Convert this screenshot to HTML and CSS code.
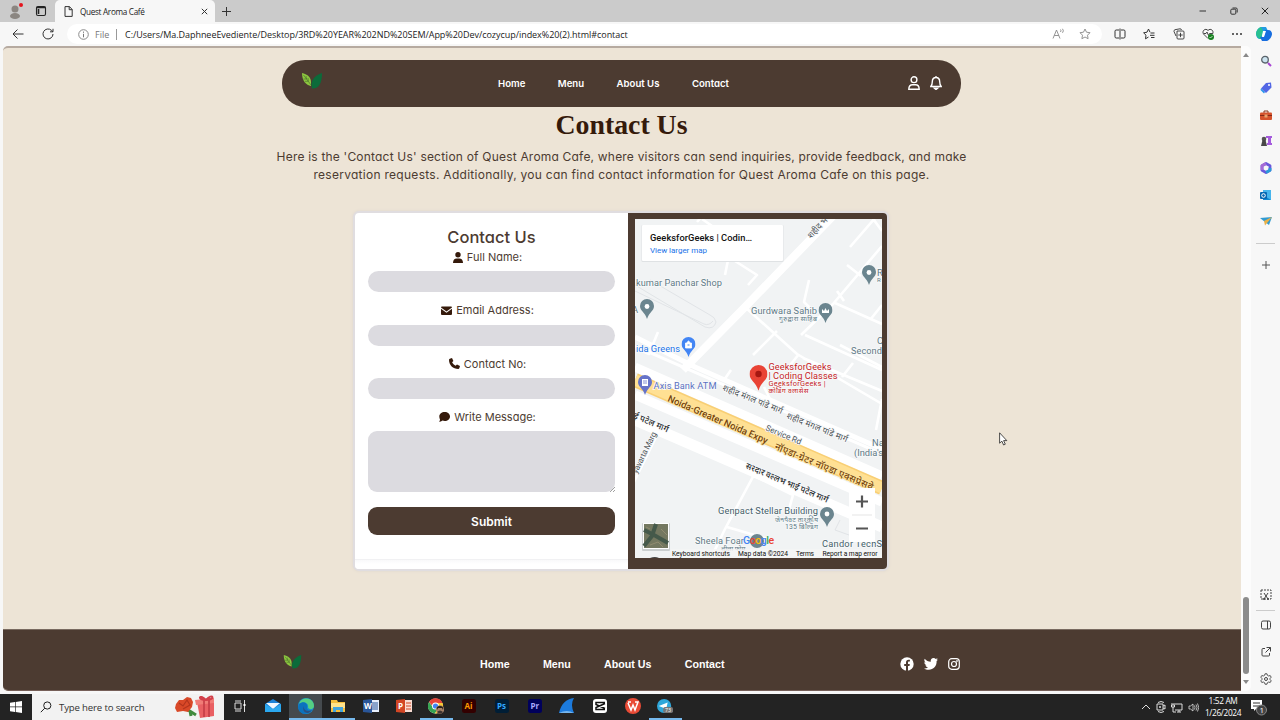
FILE: index.html
```html
<!DOCTYPE html>
<html lang="en">
<head>
<meta charset="utf-8">
<title>Quest Aroma Café</title>
<link rel="stylesheet" href="styles.css">
</head>
<body>
<svg class="defs" width="0" height="0">
  <symbol id="leaf" viewBox="0 0 20 16"><path fill="#8cc63f" d="M0 0c5 1 9 4 9 9v4C4 12 0 8 0 0z"/><path stroke="#466c2b" stroke-width=".6" fill="none" d="M1.500 2 9 12M4 3l.5 3-3 0M6 5l.3 3.300-3.300 0"/><path fill="#0b6b3a" d="M20 0c0 10-3 16-10 15.500C8 9 11 3 20 0z"/></symbol>
  <symbol id="pin" viewBox="0 0 14 20"><path d="M7 0a7 7 0 0 0-7 7c0 5 5 6 7 13 2-7 7-8 7-13a7 7 0 0 0-7-7z"/></symbol>
</svg>
<div class="screen">
  <header class="titlebar">
    <div class="profile">
      <svg width="18" height="18" viewBox="0 0 18 18"><circle cx="8" cy="7" r="3.500" fill="#8b8681"/><ellipse cx="8" cy="14" rx="5" ry="3" fill="#8b8681"/><circle cx="14" cy="3" r="2" fill="#e5141d"/></svg>
      <svg width="12" height="12" viewBox="0 0 12 12"><rect x="1.500" y="1.500" width="9" height="9" rx="1.500" fill="none" stroke="#222" stroke-width="1.100"/><path d="M1.500 2.500h9M3.500 4v5" stroke="#222" stroke-width="1.600"/></svg>
    </div>
    <div class="tab">
      <svg width="9" height="11" viewBox="0 0 9 11"><path d="M1 .6h4.500L8.200 3.500v6.900H1zM5.200.6v3.100h3" fill="none" stroke="#333"/></svg>
      <span class="tab-title">Quest Aroma Café</span>
      <svg width="7" height="7" viewBox="0 0 7 7"><path d="M.8.8l5.400 5.400M6.200.8.8 6.200" stroke="#333"/></svg>
    </div>
    <svg class="newtab" width="11" height="11" viewBox="0 0 11 11"><path d="M5.500 1v9M1 5.500h9" stroke="#333"/></svg>
    <div class="winctl">
      <svg width="8" height="8" viewBox="0 0 8 8"><path d="M.5 4h6.500" stroke="#333"/></svg>
      <svg width="8" height="8" viewBox="0 0 8 8"><rect x=".8" y="2.200" width="5" height="5" rx="1" fill="none" stroke="#333"/><path d="M2.500 1h3.500q1.200 0 1.200 1.200V5.500" fill="none" stroke="#333"/></svg>
      <svg width="8" height="8" viewBox="0 0 8 8"><path d="M.8.8l6.400 6.400M7.200.8.8 7.200" stroke="#222"/></svg>
    </div>
  </header>
  <div class="toolbar">
    <div class="navbtns">
      <svg width="12" height="12" viewBox="0 0 12 12"><path d="M11.500 6H1M5.500 1.500 1 6l4.500 4.500" fill="none" stroke="#333"/></svg>
      <svg width="12" height="12" viewBox="0 0 12 12"><path d="M11 6a5 5 0 1 1-1.600-3.700L11 3.800M11 .8v3H8" fill="none" stroke="#333"/></svg>
    </div>
    <div class="address">
      <svg width="11" height="11" viewBox="0 0 11 11"><circle cx="5.500" cy="5.500" r="4.800" fill="none" stroke="#8a8a8a"/><path d="M5.500 4.800v3.500M5.500 2.600v1.200" stroke="#777"/></svg>
      <span class="file">File</span><i class="bar"></i>
      <span class="url">C:/Users/Ma.DaphneeEvediente/Desktop/3RD%20YEAR%202ND%20SEM/App%20Dev/cozycup/index%20(2).html#contact</span>
      <svg class="read" width="13" height="12" viewBox="0 0 13 12"><path d="M1 10.500 4.500 2 8 10.500M2.300 7.500h4.500M8.500 1.500q1 1.200 0 2.500M10.500.8q1.700 2 0 4" fill="none" stroke="#888" stroke-width=".9"/></svg>
      <svg width="12" height="12" viewBox="0 0 12 12"><path d="m6 1 1.500 3.200 3.500.5-2.500 2.500.6 3.500L6 9 2.900 10.700l.6-3.500L1 4.700l3.500-.5z" fill="none" stroke="#888" stroke-width=".9"/></svg>
    </div>
    <div class="tools">
      <svg width="12" height="12" viewBox="0 0 12 12"><path d="M5 2H2.200Q1 2 1 3.200v5.600Q1 10 2.200 10H5M7 2h2.800Q11 2 11 3.200v5.600Q11 10 9.800 10H7M6 .5v11" fill="none" stroke="#333"/></svg>
      <svg width="12" height="12" viewBox="0 0 12 12"><path d="M7 4.200 5.500 1 4 4.200.6 4.800 3 7.200l-.5 3.600L5.500 9M7.500 5h4M7 7.300h4.500M8 9.500h3.500" fill="none" stroke="#333"/></svg>
      <svg width="12" height="12" viewBox="0 0 12 12"><path d="M3 8 1 3.500Q.8 2 2 1.700L7 .8Q8.400.8 8.500 2M4 3h6q1 0 1 1v6q0 1-1 1H5q-1 0-1-1zM7.500 4.800v4.400M5.300 7h4.400" fill="none" stroke="#333" stroke-width=".9"/></svg>
      <svg width="12" height="12" viewBox="0 0 12 12"><path d="M6 10.500 1.500 6C-.5 3 3.500-.5 6 2.500 8.500-.5 12.500 3 10.500 6M2 5.500h2l1-1.500 1.500 3.500 1-2h3" fill="none" stroke="#333" stroke-width=".9"/><circle cx="9" cy="9" r="3" fill="#16801f"/><path d="m7.500 9 1 1 2-2" stroke="#fff" fill="none" stroke-width=".7"/></svg>
      <svg width="12" height="12" viewBox="0 0 12 12"><g fill="#333"><circle cx="2" cy="6" r="1"/><circle cx="6" cy="6" r="1"/><circle cx="10" cy="6" r="1"/></g></svg>
      <svg class="copilot" width="16" height="16" viewBox="0 0 16 16"><path d="M5 1h5l2 4-5 1-2 7H4C2 13 0 11 0 8s2-6 5-7z" fill="#249be4"/><path d="M0 8c0-3 2-6 5-7l2 4-2 8H4Q1 12 0 8z" fill="#29c18f"/><path d="M9 4h3c3 0 4 2 4 4s-2 6-5 7H6l-2-4 4-1z" fill="#176ddf"/><path d="m7 5h3L8 11H6z" fill="#fff"/></svg>
    </div>
  </div>

  <div class="middle">
    <main class="page">
      <nav class="nav">
        <svg class="nav-logo" width="20" height="16"><use href="#leaf"/></svg>
        <div class="nav-links"><a>Home</a><a>Menu</a><a>About Us</a><a>Contact</a></div>
        <div class="nav-icons">
          <svg width="12" height="14" viewBox="0 0 12 14"><circle cx="6" cy="3.700" r="2.900"/><path d="M.8 13.200c0-3 1.500-4.500 3.700-4.500h3c2.200 0 3.700 1.500 3.700 4.500z"/></svg>
          <svg width="12" height="14" viewBox="0 0 12 14"><path d="M6 1.500c-2.300 0-3.700 1.800-3.700 4.200 0 2.500-.7 3.800-1.500 4.800h10.400c-.8-1-1.500-2.300-1.500-4.800 0-2.400-1.400-4.200-3.700-4.200zM6 0v1.500"/><path d="M4.500 12.300h3L6 13.500z" fill="#fff"/></svg>
        </div>
      </nav>
      <h1 class="title">Contact Us</h1>
      <p class="intro"><span class="line l1">Here is the 'Contact Us' section of Quest Aroma Cafe, where visitors can send inquiries, provide feedback, and make</span><span class="line l2">reservation requests. Additionally, you can find contact information for Quest Aroma Cafe on this page.</span></p>
      <section class="card">
        <form class="form">
          <h2>Contact Us</h2>
          <label><svg width="10" height="11" viewBox="0 0 10 11"><circle cx="5" cy="2.800" r="2.700"/><path d="M0 11c0-3.300 1.600-4.500 3.800-4.500h2.400C8.400 6.500 10 7.700 10 11z"/></svg><span>Full Name:</span></label>
          <div class="field"></div>
          <label><svg width="11" height="9" viewBox="0 0 11 9"><path d="M1 .5h9q1 0 1 1L5.500 5.500 0 1.500q0-1 1-1z"/><path d="M0 2.700 5.500 6.700 11 2.700V8q0 1-1 1H1Q0 9 0 8z"/></svg><span>Email Address:</span></label>
          <div class="field"></div>
          <label><svg width="11" height="11" viewBox="0 0 11 11"><path d="M.8.7 3 0l1.400 3-1.300 1.300c.7 1.500 2 2.800 3.500 3.500L8 6.500 11 8l-.7 2.300q-.3.7-1 .7C4 11 0 7 0 1.700Q0 1 .8.700z"/></svg><span>Contact No:</span></label>
          <div class="field"></div>
          <label><svg width="11" height="10" viewBox="0 0 11 10"><path d="M5.700 0C8.700 0 11 2 11 4.500S8.700 9 5.700 9q-1.200 0-2.200-.4Q2 9.800 0 9.800q1-1 1-2.400Q.3 6 .3 4.500C.3 2 2.700 0 5.700 0z"/></svg><span>Write Message:</span></label>
          <div class="field message"><svg width="5" height="5" viewBox="0 0 5 5"><path d="M0 5 5 0M3 5l2-2" stroke="#777" stroke-width=".7"/></svg></div>
          <button type="button">Submit</button>
          <div class="form-end"></div>
        </form>
        <div class="mapbox">
          <svg class="map" width="247" height="339" viewBox="635 219 247 339">
            <rect x="635" y="219" width="247" height="339" fill="#f1f3f4"/>
            <g fill="none" stroke="#e1e4e7"><path d="M635 285 705 327q9 3 11-5-1-5-6-7L650 280M635 291l69 33q5 2 9-3M840 520l-5 10 14 5q7-1 5-9"/></g>
            <g fill="none" stroke="#fff" stroke-width="2.600" stroke-linejoin="round">
              <path d="M850 247 882 210M871 216l11 15M697 222l7-8M702 219l30 21-7 35M735 261l22 14-9 10M814 312l-10-10 5-22M801 335 833 304 882 246M847 265l14 11M835 303l47 21M870 320l12-15M837 291l7 10M745 307l52 47 85 50M799 354l-12 15M805 335l77 35M777 331 753 355M803 358l79 33M840 345l42 22M658 332l-9 22-11-5M731 370l-7 10M770 399l-6-12M882 399l-6 31M842 377l11-14M755 473l-30 56-14 29M727 527l44 13M752 475l41 20-5 18M658 433l-28 57"/>
            </g>
            <g fill="none" stroke="#fff">
              <path d="m833 216-88 91-62 63" stroke-width="8"/>
              <path d="M635 337l60 30 187 82" stroke-width="5"/><path d="M635 346l247 108" stroke-width="3"/>
              <path d="M635 367l247 109M635 395l247 107" stroke-width="9"/>
              <path d="M635 420 882 527" stroke-width="11"/>
            </g>
            <path d="M635 380 882 488" stroke="#f9cf74" stroke-width="14"/><path d="M635 380 882 488" stroke="#ffe093" stroke-width="11"/>
            <g font-family="Roboto, 'Noto Sans', sans-serif" stroke="#f8f9fa" stroke-width="1.500" paint-order="stroke">
              <g fill="#607985" font-size="9.300">
                <text x="636" y="285.500" textLength="86">kumar Panchar Shop</text>
                <text x="751" y="314" textLength="66">Gurdwara Sahib</text>
                <text x="779" y="321" font-size="7" textLength="38">गुरुद्वारा साहिब</text>
                <text x="851" y="353.500" textLength="31">Second</text><text x="877" y="344">C</text><text x="877" y="276">R</text><text x="877" y="282" font-size="6">R</text>
                <text x="632" y="313">A</text>
                <text x="872" y="446">Na</text><text x="854" y="455.500">(India's</text>
                <text x="718" y="514" fill="#455f69" textLength="100">Genpact Stellar Building</text>
                <text x="775" y="522" font-size="7" textLength="43">जेनपैक्ट तारकीय</text><text x="785" y="529" font-size="7" textLength="33">135 बिल्डिंग</text>
                <text x="695" y="543.500" textLength="49">Sheela Foar</text><text x="721" y="551" font-size="6.500">शीला फोम</text>
                <text x="822" y="547" fill="#455f69" textLength="60">Candor TechS</text>
              </g>
              <text x="636" y="351.500" font-size="9.300" fill="#1a73e8" textLength="44">ida Greens</text>
              <text x="653.500" y="389" font-size="9.300" fill="#5b72c2" textLength="63">Axis Bank ATM</text>
              <g fill="#c5221f"><text x="768.500" y="369.500" font-size="9.300" textLength="63">GeeksforGeeks</text><text x="768.500" y="379" font-size="9.300" textLength="69">| Coding Classes</text><text x="768.500" y="386" font-size="7.500" textLength="57">GeeksforGeeks |</text><text x="768.500" y="393" font-size="7" textLength="40">कोडिंग क्लासेस</text></g>
              <g fill="#4c5357" font-size="8.600">
                <text transform="translate(811 239) rotate(-47)" textLength="30">शहीद भग</text>
                <text transform="translate(722 390) rotate(22)" textLength="64">शहीद मंगल पांडे मार्ग</text><text transform="translate(786 418) rotate(22)" textLength="65">शहीद मंगल पांडे मार्ग</text>
                <text transform="translate(765 430) rotate(23)" font-size="8.300" textLength="38">Service Rd</text>
                <g fill="#292c2f" font-weight="500"><text transform="translate(633 418) rotate(23)" textLength="37">ई पटेल मार्ग</text>
                <text transform="translate(745 468) rotate(23)" textLength="89">सरदार वल्लभ भाई पटेल मार्ग</text></g>
                <text transform="translate(637 474) rotate(-64)" font-size="8.300" textLength="45">yavarta Marg</text>
              </g>
              <g fill="#76440e" stroke="#ffe49b" font-size="9.700" font-weight="500"><text transform="translate(667 401) rotate(23.500)" textLength="108">Noida-Greater Noida Expy</text><text transform="translate(774 449) rotate(23)" textLength="106">नॉएडा-ग्रेटर नॉएडा एक्सप्रेसवे</text></g>
            </g>
            <g fill="#6b858f"><use href="#pin" x="640" y="299" width="14" height="20"/><use href="#pin" x="862" y="265" width="14" height="20"/><use href="#pin" x="818.500" y="303" width="14" height="20"/><use href="#pin" x="820" y="507" width="14" height="20"/><circle cx="757" cy="541" r="7"/></g>
            <g fill="#fff"><circle cx="647" cy="306.500" r="2.400"/><circle cx="869" cy="272.500" r="2.400"/><path d="M822 313v-4l2 2 1.500-3 1.500 3 2-2v4z"/><circle cx="827" cy="514" r="2.400"/></g>
            <use href="#pin" x="681.500" y="337" width="14" height="20" fill="#4285f4"/><path d="M685.500 343h6v5h-6zM687 343q1.500-4 3 0" fill="#fff" stroke="#fff" stroke-width=".8"/><path d="M687.500 345h2" stroke="#4285f4"/>
            <use href="#pin" x="638" y="375" width="14" height="20" fill="#6673c8"/><path d="M642 379h6v7h-6z" fill="#fff"/><path d="M643 381h4M643 383h4" stroke="#6673c8" stroke-width=".8"/>
            <use href="#pin" x="749.500" y="365" width="18" height="25.700" fill="#e94335"/><circle cx="758.500" cy="374" r="3.200" fill="#a61711"/>
            <g font-family="Roboto, sans-serif" font-size="10.500" font-weight="500"><text x="743" y="544" textLength="31"><tspan fill="#4285f4">G</tspan><tspan fill="#ea4335">o</tspan><tspan fill="#fbbc05">o</tspan><tspan fill="#4285f4">g</tspan><tspan fill="#34a853">l</tspan><tspan fill="#ea4335">e</tspan></text></g>
            <rect x="641.500" y="225" width="142" height="37" rx="1" fill="#dfe2e4"/><rect x="642" y="225" width="141" height="36" rx="1" fill="#fff"/>
            <g font-family="Roboto, sans-serif"><text x="650" y="240.500" font-size="9.300" font-weight="500" fill="#111" textLength="102">GeeksforGeeks | Codin…</text><text x="650" y="252.500" font-size="8" fill="#1a73e8" textLength="57">View larger map</text>
            <rect x="671" y="549" width="211" height="9" fill="#f5f5f5" opacity=".8"/>
            <g font-size="6.700" fill="#111"><text x="672" y="555.500" textLength="58">Keyboard shortcuts</text><text x="738" y="555.500" textLength="50">Map data ©2024</text><text x="796" y="555.500" textLength="18">Terms</text><text x="822.500" y="555.500" textLength="55">Report a map error</text></g></g>
            <rect x="849" y="488" width="26" height="54" fill="#fff"/><path d="M852 515h20" stroke="#e5e5e5"/><path d="M856 501.500h12M862 495.500v12M856 528.500h12" stroke="#555" stroke-width="2.200"/>
            <rect x="642" y="523" width="28" height="28" rx="1" fill="#cbcfd0"/><rect x="643" y="523" width="26" height="26" fill="#fff"/><rect x="644" y="524" width="24" height="24" fill="#747860"/><path d="m644 530 10 5 14 8M656 524l-4 12-8 10" stroke="#45594a" stroke-width="4" fill="none"/><path d="M650 545l8-3 5 5M661 529l6 6M646 527l4 2" stroke="#918c70" fill="none"/>
            <path d="M650 558q5-2 9 0z" fill="#444"/>
          </svg>
        </div>
      </section>
      <footer class="footer">
        <svg class="foot-logo" width="19" height="14"><use href="#leaf"/></svg>
        <div class="foot-links"><a>Home</a><a>Menu</a><a>About Us</a><a>Contact</a></div>
        <div class="foot-icons">
          <svg width="14" height="14" viewBox="0 0 14 14"><circle cx="7" cy="7" r="6.700" fill="#fff"/><path d="M6 14V9H4.200V7H6V5.500C6 3.600 7 2.700 8.500 2.700l1.400.1v1.800H9C8.200 4.600 8 5 8 5.700V7h1.800l-.3 2H8v5z" fill="#4c3b31"/></svg>
          <svg width="14" height="12" viewBox="0 0 14 12"><path fill="#fff" d="M14 1.700 12.600 3C13 8 9 12 4.400 11.700 2.800 11.700 1.300 11.300 0 10.400c1.500.1 2.900-.3 4-1.200-1.300 0-2.200-.9-2.600-2h1.200C1.200 6.800.3 5.600.3 4.200l1.300.4C.3 3.600 0 2 .7.700c1.600 1.900 3.600 2.900 6.100 3C6.300 1.500 7.800 0 9.600 0q1.200 0 2.100.9L13.500.2q-.3 1-1.200 1.600z"/></svg>
          <svg width="12" height="12" viewBox="0 0 12 12" fill="none" stroke="#fff" stroke-width="1.200"><rect x=".7" y=".7" width="10.600" height="10.600" rx="3"/><circle cx="6" cy="6" r="2.500"/><circle cx="9" cy="3" r=".3"/></svg>
        </div>
      </footer>
    </main>
    <div class="scroll"><i class="up"></i><div class="thumb"></div><i class="down"></i></div>
    <aside class="side">
      <div><svg viewBox="0 0 12 12"><path d="m8 8 3 3" stroke="#a845d4" stroke-width="2"/><circle cx="5" cy="4.700" r="3.300" fill="#cce3ef" stroke="#59636b" stroke-width="1.300"/></svg></div>
      <div><svg viewBox="0 0 12 12"><path d="m6 1 5-.5.5 5L6 11 1 6.500z" fill="#5367e5"/><path d="M1 6.500 5 10l-1 1.500L.5 8z" fill="#2996ed"/><circle cx="9" cy="3" r="1" fill="#fff"/></svg></div>
      <div><svg viewBox="0 0 12 12"><path d="M4 4V2h4v2" fill="none" stroke="#87351c"/><rect y="3.500" width="12" height="7.500" rx="1" fill="#d5522c"/><path d="M0 6.500h12" stroke="#862a19"/><rect x="4.500" y="5.500" width="3" height="3" fill="#e8a26e"/></svg></div>
      <div><svg viewBox="0 0 12 12"><path d="M6 1h6v2h-1v5h1v2H7V8h1V3H6z" fill="#a55bdd"/><circle cx="4" cy="4" r="2.300" fill="#555"/><path d="M2.500 5h3L7 11H1z" fill="#484848"/></svg></div>
      <div><svg viewBox="0 0 12 12"><path d="M6 1.500 10 3.700v4.600L6 10.500 2 8.300V3.700z" fill="none" stroke="#6958dc" stroke-width="2.800" stroke-linejoin="round"/><path d="M2 8V3.700L6 1.500" fill="none" stroke="#a56bd5" stroke-width="2.800" stroke-linejoin="round"/><path d="M10 6v2.300L6 10.500" fill="none" stroke="#299bd9" stroke-width="2.800" stroke-linejoin="round"/></svg></div>
      <div><svg viewBox="0 0 12 12"><path d="M3 1h8v10H3z" fill="#47b5ed"/><path d="m3 6 8 5H3z" fill="#1388d2"/><rect y="3" width="7" height="7" rx="1" fill="#0868b3"/><circle cx="3.500" cy="6.500" r="1.800" fill="none" stroke="#fff"/></svg></div>
      <div><svg viewBox="0 0 12 12"><path d="M0 3 12 2 9 10 5 7z" fill="#329bd1"/><path d="M12 2 4 6l1 4.500L7 8z" fill="#e9b047"/></svg></div>
      <i class="sep"></i>
      <div><svg viewBox="0 0 12 12"><path d="M6 2v8M2 6h8" stroke="#555"/></svg></div>
      <span class="space"></span>
      <div class="capture"><svg viewBox="0 0 12 12"><rect x="1" y="1" width="10" height="9" fill="none" stroke="#444" stroke-dasharray="2 1"/><path d="m4 4 4 6M8 4l-4 6" stroke="#444"/><circle cx="4" cy="10" r="1" fill="#444"/><circle cx="8" cy="10" r="1" fill="#444"/></svg></div>
      <i class="sep"></i>
      <div><svg viewBox="0 0 12 12"><rect x="1.500" y="2" width="9" height="8" rx="1.500" fill="none" stroke="#444"/><path d="M7.500 2v8" stroke="#444"/></svg></div>
      <div><svg viewBox="0 0 12 12"><path d="M5 2.500H3Q2 2.500 2 3.500V9q0 1 1 1h5.500q1 0 1-1V7M6.500 1.500h4v4M10.500 1.500 5.500 6.500" fill="none" stroke="#444"/></svg></div>
      <div><svg viewBox="0 0 12 12"><path d="m5 .8h2l.4 1.500 1.300.7 1.500-.5 1 1.700L10.100 5.300v1.400l1.100 1.100-1 1.700L8.700 9l-1.300.7L7 11.200H5l-.4-1.500L3.300 9l-1.500.5-1-1.700 1.100-1.100V5.300L.8 4.200l1-1.700 1.500.5 1.300-.7z" fill="none" stroke="#444" stroke-width=".9"/><circle cx="6" cy="6" r="1.500" fill="none" stroke="#444"/></svg></div>
    </aside>
  </div>

  <div class="taskbar">
    <div class="start"><svg width="12" height="12" viewBox="0 0 12 12"><path fill="#fff" d="M0 1.700 5 1v4.600H0zm5.700-.8L12 0v5.600H5.700zM0 6.300h5v4.600l-5-.7zm5.700 0H12V12l-6.300-.9z"/></svg></div>
    <div class="search"><svg width="12" height="12" viewBox="0 0 12 12"><circle cx="7.300" cy="4.500" r="3.600" fill="none" stroke="#222"/><path d="m4.800 7.200-4 4" stroke="#222"/></svg><span>Type here to search</span>
      <svg class="gift" width="41" height="24" viewBox="0 0 41 24"><path d="m10 13 11 7M15 16l1 5" stroke="#408a3d" stroke-width="3"/><path d="M1 9 4 5l4 0 4-3 4 1 2 4-1 5-4 5-5-1-6 1-2-4z" fill="#d94928"/><path d="m4 8 4 3 4-6 3 5-7 4" stroke="#b3341d" stroke-width="1.200" fill="none"/><path d="m22 7 17-2v16l-14 2z" fill="#e96063"/><path d="m20 5 19-2v5l-18 2z" fill="#f17c77"/><path d="M29 3v19M34 3v19" stroke="#c63e47" stroke-width="1.700"/><path d="M31 5c-7-7-9 0 0 0 7-8 10 0 0 0" fill="none" stroke="#d2404a" stroke-width="2"/></svg></div>
    <div class="apps">
      <div><svg viewBox="0 0 16 16"><path d="M3 3h6M3 13h6M3 5h6v6H3zM12.500 2v12" fill="none" stroke="#ddd"/><path d="M12.500 6v2" stroke="#fff" stroke-width="2"/></svg></div>
      <div><svg viewBox="0 0 16 16"><path d="m0 6 8-5 8 5v8H0z" fill="#1c82d8"/><path d="M1 5h14L8 11z" fill="#eef7ff"/><path d="m0 6 8 5 8-5v8H0z" fill="#2ba8ef"/></svg></div>
      <div class="active"><svg viewBox="0 0 16 16"><circle cx="8" cy="8" r="8" fill="#168bd0"/><path d="M1 6C3-2 16-1 16 8c0 4-6 4-6 1 1-4-5-6-9-3z" fill="#55cf83"/><path d="M1 6c6-4 9 0 8 4 0 2 3 3 5 2-6 8-17 2-13-6z" fill="#0c72bd"/><path d="M6 8c-1 5 4 6 8 4-4 6-11 2-8-4z" fill="#2b4f80"/></svg></div>
      <div class="open"><svg viewBox="0 0 16 16"><path d="M1 2h6l1 2h7v10H1z" fill="#f5be3d"/><path d="M1 5h14v5H1z" fill="#ffe28a"/><path d="M3 9h10v5h-3v-2H6v2H3z" fill="#44a4dc"/></svg></div>
      <div><svg viewBox="0 0 16 16"><rect x="7" y="2" width="9" height="12" fill="#e8effc"/><path d="M9 5h6M9 7h6M9 9h6M9 11h6" stroke="#2a5699"/><path d="m0 2 9-1v14l-9-1z" fill="#2a5699"/><text x="1" y="11" font-size="8" fill="#fff" font-weight="bold">W</text></svg></div>
      <div><svg viewBox="0 0 16 16"><rect x="7" y="2" width="9" height="12" fill="#f9ddd4"/><path d="M10 5h5M10 8h5M10 11h5" stroke="#d24625"/><path d="m0 2 9-1v14l-9-1z" fill="#d24625"/><text x="2" y="11" font-size="8" fill="#fff" font-weight="bold">P</text></svg></div>
      <div class="open"><svg viewBox="0 0 16 16"><circle cx="7.500" cy="8" r="7.500" fill="#fff"/><path d="M1 4A7.500 7.500 0 0 1 14.500 5H8L5 9z" fill="#e74438"/><path d="M1 4a7.500 7.500 0 0 0 6 11.500l3-5-5-1z" fill="#36a452"/><path d="M14.500 5A7.500 7.500 0 0 1 7 15.500L11 8 8 5z" fill="#f9c931"/><circle cx="7.500" cy="8" r="3.500" fill="#fff"/><circle cx="7.500" cy="8" r="2.600" fill="#4285f4"/><circle cx="12" cy="11.500" r="4.200" fill="#a98367"/><path d="M9 12q-1-4 3-4t3 4l-1-2h-4z" fill="#2c211b"/><path d="M9 14q3-3 6 0-2 3-6 0" fill="#3e3431"/></svg></div>
      <div><svg viewBox="0 0 16 16"><rect x="1" y="1" width="14" height="14" rx="2.500" fill="#330000"/><text x="3.500" y="11" font-size="8" fill="#ff9a00" font-weight="bold">Ai</text></svg></div>
      <div><svg viewBox="0 0 16 16"><rect x="1" y="1" width="14" height="14" rx="2.500" fill="#001e36"/><text x="3" y="11" font-size="8" fill="#31a8ff" font-weight="bold">Ps</text></svg></div>
      <div><svg viewBox="0 0 16 16"><rect x="1" y="1" width="14" height="14" rx="2.500" fill="#00005b"/><text x="3.500" y="11" font-size="8" fill="#aaaaff" font-weight="bold">Pr</text></svg></div>
      <div><svg viewBox="0 0 16 16"><path d="M0 15C2 6 7 1 15 0q-4 6 0 15z" fill="#1c7adc"/><path d="M0 15q8-4 15 0z" fill="#76b5ed"/></svg></div>
      <div><svg viewBox="0 0 16 16"><rect x="1" y="1" width="14" height="14" rx="3" fill="#fff"/><path d="M13 4.500H4v2l9 4M13 5.500l-9 4v2h9" fill="none" stroke="#111" stroke-width="1.500"/></svg></div>
      <div><svg viewBox="0 0 16 16"><circle cx="8" cy="8" r="8" fill="#e94b36"/><path d="M3 4h3M10 4h3l-3 8-2-5-2 5-3-7" fill="none" stroke="#fff" stroke-width="1.500"/></svg></div>
      <div class="open"><svg viewBox="0 0 18 16"><circle cx="8" cy="8" r="8" fill="#2fa7da"/><path d="m2 8 10-4-2 9-3-3z" fill="#fff"/><rect x="7" y="9" width="11" height="7" rx="2" fill="#777"/><text x="9" y="15" font-size="6" fill="#fff">73</text></svg></div>
    </div>
    <div class="tray">
      <svg width="10" height="10" viewBox="0 0 10 10"><path d="m1 7 4-4 4 4" fill="none" stroke="#ddd"/></svg>
      <svg width="10" height="12" viewBox="0 0 10 12"><path d="M2 1.500q3-2 6 0M2 10.500q3 2 6 0M1 3h6v6H1zM7 5l2-1v4L7 7" fill="none" stroke="#ddd"/><circle cx="4" cy="6" r="1" fill="#ddd"/></svg>
      <svg width="12" height="11" viewBox="0 0 12 11"><path d="M4 2h7v6H4M6 10h4M8 8v2M1 1v2M3 1v2M.5 3h3v2h-3zM2 5v5h3" fill="none" stroke="#ddd"/></svg>
      <svg width="11" height="11" viewBox="0 0 11 11"><path d="M1 4h1.500L5 2v7L2.500 7H1zM6.500 3.500q1 2 0 4M8 2.500q2 3 0 6M9.500 1.500q2.500 4 0 8" fill="none" stroke="#ddd" stroke-width=".8"/></svg>
    </div>
    <div class="clock"><span>1:52 AM</span><span>1/26/2024</span></div>
    <svg class="note" width="18" height="18" viewBox="0 0 18 18"><path d="M1 2h11v9H6l-2 2v-2H1z" fill="#fff"/><path d="M3 5h7M3 8h7" stroke="#333"/><circle cx="11.500" cy="12" r="5" fill="#444" stroke="#888"/><text x="9.500" y="15" font-size="8" fill="#fff">1</text></svg>
  </div>
  <svg class="cursor" width="9" height="14" viewBox="0 0 9 14"><path d="M.6.8v10.400l2.300-2 1.700 3.800 1.700-.8-1.700-3.600h3.200z" fill="#fff" stroke="#222" stroke-width=".8"/></svg>
</div>
</body>
</html>
```
FILE: styles.css
```css
* { box-sizing: border-box; }
body { margin: 0; font-family: "Open Sans", "Noto Sans", sans-serif; }
svg { display: block; flex: none; }
.defs { position: absolute; }
.screen { position: relative; width: 1280px; height: 720px; overflow: hidden; display: flex; flex-direction: column; background: #f7f7f7; }
.titlebar { height: 22px; flex: none; display: flex; align-items: center; background: #cbcbcb; }
.profile { width: 55px; display: flex; align-items: center; gap: 10px; padding-left: 7px; }
.tab { width: 160px; height: 22px; background: #f7f7f7; border-radius: 5px 5px 0 0; display: flex; align-items: center; padding: 0 7px 0 9px; }
.tab-title { font-size: 8.200px; letter-spacing: -.32px; color: #222; margin-left: 7px; flex: 1; white-space: nowrap; }
.newtab { margin-left: 6px; }
.winctl { margin-left: auto; display: flex; gap: 23px; padding-right: 11px; }
.toolbar { height: 24px; flex: none; display: flex; align-items: center; background: #f7f7f7; }
.navbtns { width: 67px; display: flex; gap: 18px; padding-left: 12px; }
.address { width: 1035px; height: 20px; background: #fff; border-radius: 10px; display: flex; align-items: center; padding: 0 11px; font-size: 9px; white-space: nowrap; }
.file { color: #777; margin-left: 6px; width: 14px; }
.bar { width: 1px; height: 11px; background: #999; margin: 0 8px 0 7px; }
.url { color: #222; letter-spacing: -.04px; }
.read { margin-left: auto; margin-right: 14px; }
.tools { display: flex; align-items: center; gap: 17.300px; padding-left: 12px; }
.copilot { margin-left: -4px; }
.middle { height: 648px; flex: none; display: flex; }
.page { width: 1238px; height: 645px; margin-left: 3px; border-top: 2px solid #b6aaa0; border-bottom: 1px solid #765f58; border-radius: 5px 0 0 5px; overflow: hidden; background: #ede4d6; display: flex; flex-direction: column; align-items: center; color: #4c3b31; font-family: Inter, "Open Sans", sans-serif; font-feature-settings: "cv11"; }
.nav { width: 679px; height: 47px; flex: none; margin-top: 12px; margin-right: 2px; background: #4c3b31; border-radius: 23px; display: flex; align-items: center; padding: 0 19px 1px 20px; }
.nav-logo { margin-bottom: 5px; }
.nav-links { display: flex; gap: 32.500px; margin-left: 176.500px; font-size: 9.600px; font-weight: 600; color: #fff; white-space: nowrap; }
.nav-icons { margin-left: auto; display: flex; gap: 10px; fill: none; stroke: #fff; stroke-width: 1.400px; }
.title { margin: 1px 1px 0 0; height: 34px; font: bold 27.800px/34px "Liberation Serif", serif; color: #351a0b; white-space: nowrap; }
.intro { margin: 6px 1px 0 0; font-size: 12px; line-height: 18px; text-align: center; white-space: nowrap; }
.line { display: block; }
.l1 { letter-spacing: .2px; }
.l2 { letter-spacing: .28px; }
.card { width: 536px; height: 360px; flex: none; margin: 27px 2px 0 0; border: 2px solid #e0dde0; border-radius: 6px; overflow: hidden; display: flex; background: #fff; box-shadow: 0 0 3px #ddd6cf; }
.form { width: 273px; padding: 13px 13px 0; display: flex; flex-direction: column; align-items: center; }
.form h2 { margin: 0; font-size: 16.500px; line-height: 22px; font-weight: 500; flex: none; }
.form label { height: 18px; flex: none; display: flex; align-items: center; gap: 4px; margin-right: 8px; font-size: 11px; fill: #351a0b; white-space: nowrap; }
.field { width: 247px; height: 21px; margin: 5.300px 0 9px; border-radius: 10.500px; background: #dcdbe0; flex: none; }
.message { height: 61px; margin-bottom: 15px; border-radius: 9px; display: flex; align-items: flex-end; justify-content: flex-end; }
.form button { width: 247px; height: 28px; flex: none; border: 0; padding: 0; border-radius: 9px; background: #4c3b31; color: #fff; font: 600 12px Inter, sans-serif; }
.form-end { width: 273px; height: 12px; border-top: 1px solid #f1f1f3; background: linear-gradient(#f9f9fa, #fff 4px); margin-top: 24px; flex: none; }
.mapbox { flex: 1; background: #4c3b31; padding: 6px 0 0 7px; }
.footer { align-self: stretch; height: 61px; flex: none; margin-top: 58px; background: #4c3b31; border-top: 1px solid #796a60; display: flex; align-items: center; padding: 7px 281px 0 280px; }
.foot-logo { margin-bottom: 3px; }
.foot-links { display: flex; gap: 33.200px; margin-left: 178px; font: bold 10.700px "Liberation Sans", sans-serif; color: #fff; white-space: nowrap; }
.foot-icons { margin-left: auto; display: flex; align-items: center; gap: 10px; }
.scroll { width: 10px; height: 645px; background: #fcfcfc; display: flex; flex-direction: column; align-items: center; border-radius: 0 5px 5px 0; }
.up, .down { border: 3px solid transparent; border-top: 0; border-bottom: 4px solid #888; margin-top: 7px; }
.down { border-bottom: 0; border-top: 4px solid #888; margin-top: 6px; }
.thumb { width: 6px; height: 77px; margin-top: 540px; border-radius: 3px; background: #8c8c8c; flex: none; }
.side { width: 29px; height: 646px; display: flex; flex-direction: column; align-items: center; padding-top: 2px; background: #f7f7f7; }
.side > div { height: 26.700px; display: flex; align-items: center; flex: none; }
.side svg { width: 12px; height: 12px; }
.sep { width: 19px; height: 1px; background: #ccc; margin: 8px 0; flex: none; }
.side .capture { height: 14px; }
.space { flex: 1; }
.capture + .sep { margin: 8px 0 1px; }
.taskbar { height: 26px; flex: none; background: #232323; display: flex; align-items: center; }
.start { width: 32px; display: flex; justify-content: center; }
.search { width: 192px; height: 26px; background: #f2f2f2; display: flex; align-items: center; padding-left: 8px; font-size: 9.600px; letter-spacing: -.15px; color: #333; white-space: nowrap; }
.search span { margin-left: 7px; flex: 1; }
.gift { margin-right: 8px; }
.apps { display: flex; height: 26px; }
.apps div { width: 32.700px; height: 26px; display: flex; align-items: center; justify-content: center; border-bottom: 2px solid transparent; }
.apps div svg { width: 16px; height: 16px; }
.apps .open { border-color: #76b9ed; }
.apps .active { background: #454a4e; border-color: #76b9ed; }
.tray { margin-left: auto; display: flex; align-items: center; gap: 5px; }
.clock { width: 42px; margin-left: 3px; font-size: 8.300px; letter-spacing: -.35px; line-height: 12px; color: #fff; display: flex; flex-direction: column; align-items: center; }
.note { margin: 0 12px 0 6px; }
.cursor { position: absolute; left: 999px; top: 432px; }
```
